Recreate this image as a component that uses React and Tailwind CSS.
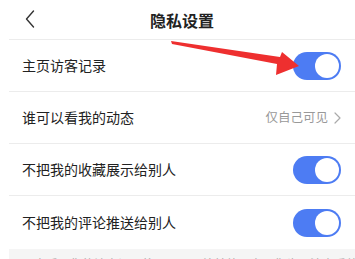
import React from 'react';

const font = { fontFamily: '"Noto Sans CJK SC", "Noto Sans", sans-serif' };

function Toggle() {
  return (
    <div className="w-[48px] h-[28px] rounded-full bg-[#4d7cf3] flex items-center justify-end pr-[2px]">
      <div className="w-[24px] h-[24px] rounded-full bg-white"></div>
    </div>
  );
}

function Row({ label, children }) {
  return (
    <div className="h-[52px] flex items-center justify-between pl-[13px] pr-[14px] border-b border-[#ececec]">
      <div className="text-[14px] text-[#222]">{label}</div>
      {children}
    </div>
  );
}

export default function App() {
  return (
    <div className="w-[355px] h-[259px] overflow-hidden bg-white relative pl-[9px]" style={font}>
      {/* 顶部导航 */}
      <div className="h-[40px] flex items-center border-b border-[#ececec] relative">
        <svg className="absolute left-[16px] top-[10px]" width="10" height="18" viewBox="0 0 10 18">
          <path d="M8.5 1 L1.5 9 L8.5 17" fill="none" stroke="#333" strokeWidth="1.4" strokeLinecap="round" strokeLinejoin="round" />
        </svg>
        <div className="flex-1 text-center text-[16px] font-bold text-[#222]">隐私设置</div>
      </div>

      <Row label="主页访客记录"><Toggle /></Row>
      <Row label="谁可以看我的动态">
        <div className="flex items-center gap-[6px] text-[12.5px] text-[#999]">
          <span>仅自己可见</span>
          <svg width="7" height="12" viewBox="0 0 7 12">
            <path d="M1 1 L6 6 L1 11" fill="none" stroke="#aaa" strokeWidth="1.2" strokeLinecap="round" strokeLinejoin="round" />
          </svg>
        </div>
      </Row>
      <Row label="不把我的收藏展示给别人"><Toggle /></Row>
      <div className="h-[53px] flex items-center justify-between pl-[13px] pr-[14px]">
        <div className="text-[14px] text-[#222]">不把我的评论推送给别人</div>
        <Toggle />
      </div>

      <div className="bg-[#f5f5f5] h-[20px] pl-[13px] pt-[6px] text-[12px] text-[#aaa] whitespace-nowrap">
        开启后，你的访客记录将不再展示给其他用户，你也无法查看他人的访客记录
      </div>

      {/* 红色箭头 */}
      <svg className="absolute left-0 top-0 pointer-events-none" width="355" height="259">
        <polygon points="171,41 280,57 282,52 299,66 276,75 277,64 172,44" fill="#ee2f2f" />
      </svg>
    </div>
  );
}
